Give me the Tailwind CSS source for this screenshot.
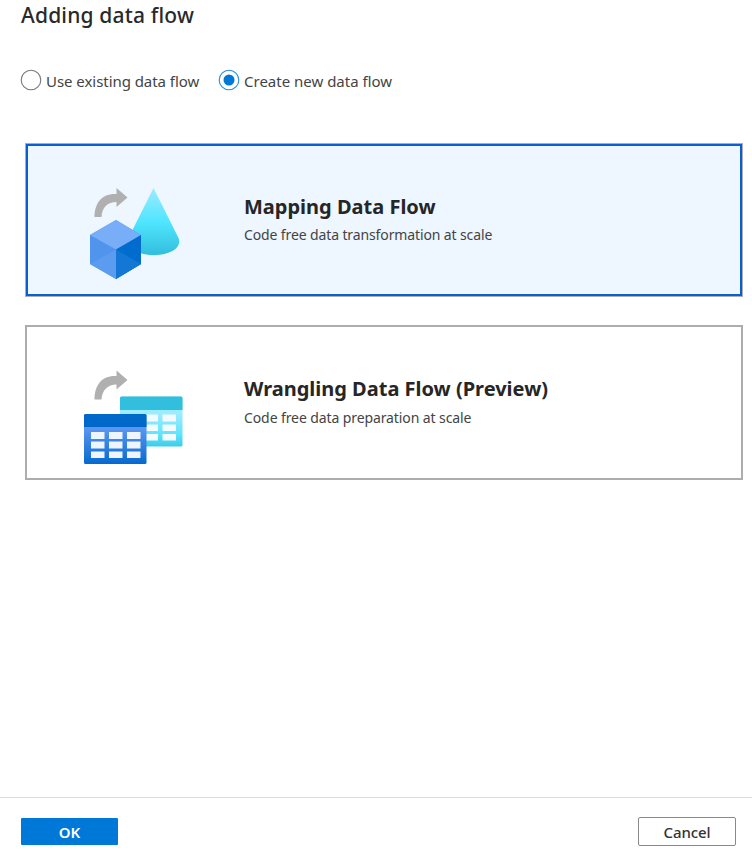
<!DOCTYPE html>
<html lang="en">
<head>
<meta charset="utf-8">
<title>Adding data flow</title>
<script src="https://cdn.jsdelivr.net/npm/@tailwindcss/browser@4"></script>
</head>
<body class="bg-white font-['Noto_Sans','Open_Sans',sans-serif] text-[#444] overflow-hidden">
<main class="flex h-[858px] w-[752px] flex-col whitespace-nowrap">
  <h1 class="h-[31px] pl-[21px] text-[21px] leading-[31px] font-medium tracking-[0.18px] text-[#292929]"><span>Adding data flow</span></h1>
  <div class="mt-[38px] ml-[20px] flex h-[22px] items-center text-[15px] leading-[22px]">
    <label class="flex w-[198px] items-center gap-[4px]">
      <svg class="size-[22px] shrink-0" viewBox="0 0 22 22"><circle cx="11" cy="11" r="9.8" fill="#fff" stroke="#767676" stroke-width="1.1"/></svg>
      <span class="relative top-px tracking-[-0.05px]">Use existing data flow</span>
    </label>
    <label class="flex items-center gap-[4px]">
      <svg class="size-[22px] shrink-0" viewBox="0 0 22 22"><circle cx="11" cy="11" r="9.8" fill="#fff" stroke="#2b8bdc" stroke-width="1.1"/><circle cx="11" cy="11" r="5.5" fill="#0078d7"/></svg>
      <span class="relative top-px">Create new data flow</span>
    </label>
  </div>
  <section class="mt-[52px] ml-[25px] flex h-[154px] w-[718px] border border-[#a9adb5]">
    <div class="flex w-full border-2 border-[#0b5ed0] bg-[#eef6ff]">
      <svg class="mt-[29px] ml-[47px] h-[115px] w-[120px] shrink-0" viewBox="0 0 120 115">
        <defs>
          <linearGradient id="cone" x1="0" y1="0" x2="0" y2="1"><stop offset="0" stop-color="#9cebff"/><stop offset=".5" stop-color="#50e6ff"/><stop offset="1" stop-color="#32bedd"/></linearGradient>
        </defs>
        <path d="M78.5 13L53 64C51 73 63 80 78.500 80S106 74 104 64Z" fill="url(#cone)"/>
        <path d="M19.500 42H26.500C27 32 33 27 41.500 27V32L52.500 22.500L41.500 13V19C28 18 19.500 27 19.500 42Z" fill="#b0b0b0"/>
        <path d="M41 45L66 60V89L41 104L15 89V60Z" fill="#5094ed"/>
        <path d="M41 45L66 60L41 74.500L15 60Z" fill="#78aef7"/>
        <path d="M66 60V89L41 104V74.500Z" fill="#006cce"/>
        <path d="M15 89L41 74.500V104Z" fill="#5b9cf0"/>
        <path d="M66 89L41 74.500V104Z" fill="#1277d5"/>
      </svg>
      <div class="mt-[46px] ml-[49px]">
        <h2 class="h-[29px] text-[20px] leading-[30px] font-bold text-[#262626]"><span>Mapping Data Flow</span></h2>
        <p class="h-[22px] text-[14px] leading-[28px] tracking-[-0.12px]"><span>Code free data transformation at scale</span></p>
      </div>
    </div>
  </section>
  <section class="mt-[28px] ml-[25px] flex h-[155px] w-[718px] border-2 border-[#adadad] bg-white">
    <svg class="mt-[33px] ml-[48px] h-[115px] w-[120px] shrink-0" viewBox="0 0 120 115">
      <defs>
        <linearGradient id="cyan" x1="0" y1="0" x2="0" y2="1"><stop offset="0" stop-color="#9cebff"/><stop offset=".5" stop-color="#50e6ff"/><stop offset="1" stop-color="#32bedd"/></linearGradient>
        <linearGradient id="blue" x1="0" y1="0" x2="0" y2="1"><stop offset="0" stop-color="#5a95ef"/><stop offset=".3" stop-color="#5a95ef"/><stop offset="1" stop-color="#0669ce"/></linearGradient>
        <linearGradient id="cyanBody" x1="0" y1="0" x2="0" y2="1"><stop offset="0" stop-color="#9cebff"/><stop offset=".35" stop-color="#9cebff"/><stop offset=".75" stop-color="#62e4fb"/><stop offset="1" stop-color="#3fcbe8"/></linearGradient>
      </defs>
      <path d="M19.500 39.500H26.500C27 30 33 24.500 41.500 24.500V29.500L52.500 20L41.500 10.500V16C28 15 19.500 24 19.500 39.500Z" fill="#b0b0b0"/>
      <rect x="45" y="36.500" width="62.500" height="50" rx="1.5" fill="url(#cyanBody)"/>
      <path d="M45 50V38q0-1.500 1.500-1.500H106q1.500 0 1.500 1.500V50Z" fill="#32bedd"/>
      <path d="M69 54.500H83V61.500H69ZM87.500 54.500H101V61.500H87.500ZM69 64.500H83V71H69ZM87.500 64.500H101V71H87.500ZM69 74H83V80.500H69ZM87.500 74H101V80.500H87.500Z" fill="#f2fbff"/>
      <rect x="9" y="54" width="62.500" height="50" rx="1.5" fill="url(#blue)"/>
      <path d="M9 67V55.500Q9 54 10.500 54H70q1.500 0 1.500 1.500V67Z" fill="#0068c9"/>
      <path d="M16 72H29.500V79H16ZM34 72H47.500V79H34ZM52 72H65.500V79H52ZM16 81.500H29.500V88.500H16ZM34 81.500H47.500V88.500H34ZM52 81.500H65.500V88.500H52ZM16 91.500H29.500V98H16ZM34 91.500H47.500V98H34ZM52 91.500H65.500V98H52Z" fill="#eef5ff"/>
    </svg>
    <div class="mt-[47px] ml-[49px]">
      <h2 class="h-[30px] text-[20px] leading-[30px] font-bold text-[#262626]"><span>Wrangling Data Flow (Preview)</span></h2>
      <p class="h-[22px] text-[14px] leading-[28px] tracking-[-0.1px]"><span>Code free data preparation at scale</span></p>
    </div>
  </section>
  <footer class="mt-auto flex h-[61px] justify-between border-t border-[#dcdcdc] pt-[19px] pr-[16px] pl-[21px] text-[15px]">
    <button class="mt-px flex h-[27px] w-[97px] items-center justify-center rounded-[1px] bg-[#0078d7] pt-[2px] text-[15px] font-semibold text-white"><span>OK</span></button>
    <button class="flex h-[29px] w-[98px] items-center justify-center rounded-[2px] border border-[#8a8a8a] bg-white pt-[2px] font-medium tracking-[-0.1px] text-[#333]"><span>Cancel</span></button>
  </footer>
</main>
</body>
</html>
